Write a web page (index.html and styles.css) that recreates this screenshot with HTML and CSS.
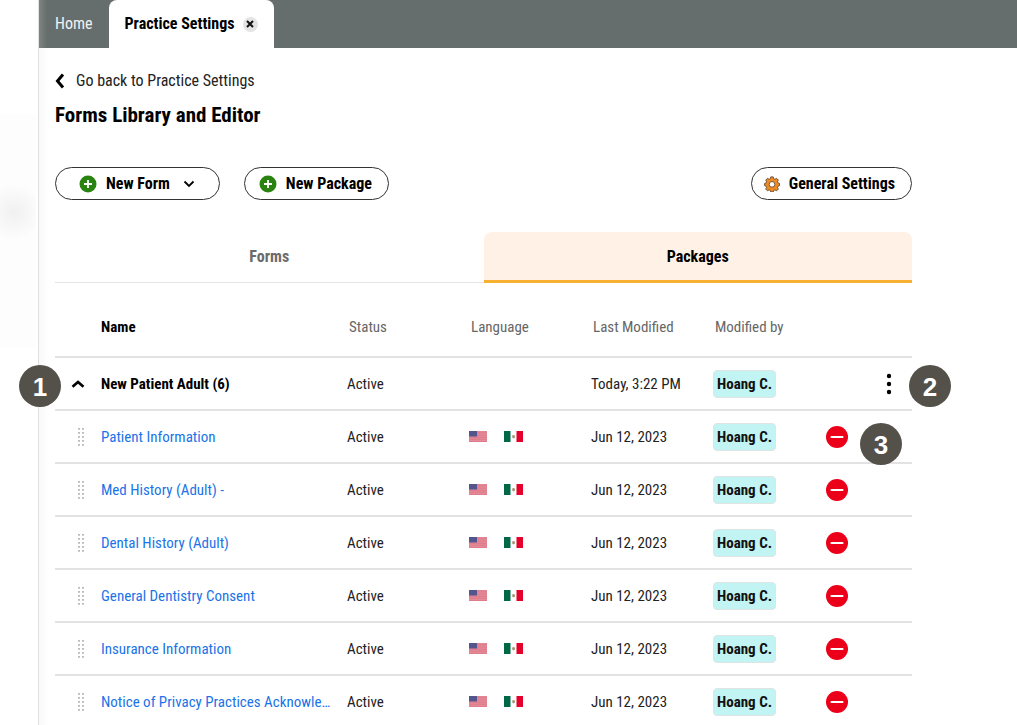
FILE: index.html
```html
<!DOCTYPE html>
<html lang="en">
<head>
    <meta charset="UTF-8">
    <meta name="viewport" content="width=device-width, initial-scale=1.0">
    <title>Forms Library and Editor</title>
    <link rel="stylesheet" href="styles.css">
</head>
<body>
    <!-- Shared icons -->
    <svg class="sprite" aria-hidden="true">
        <symbol id="icon-plus" viewBox="0 0 18 18">
            <circle cx="9" cy="9" r="8.5" fill="#2a8210"/>
            <path d="M9 5v8M5 9h8" stroke="#fff" stroke-width="1.8"/>
        </symbol>
        <symbol id="icon-remove" viewBox="0 0 22 22">
            <circle cx="11" cy="11" r="11" fill="#ec0019"/>
            <path d="M5.500 11h11" stroke="#fff" stroke-width="2.200" stroke-linecap="round"/>
        </symbol>
        <symbol id="icon-drag" viewBox="0 0 8 20">
            <path d="M2 1v18M6 1v18" stroke="#bcbcbc" stroke-width="2" stroke-dasharray="1.800 2.200"/>
        </symbol>
        <symbol id="flag-us" viewBox="0 0 18 11">
            <rect width="18" height="11" fill="#e58c98"/>
            <path d="M0 1.200h18M0 3h18M0 4.800h18M0 6.600h18M0 8.400h18M0 10.500h18" stroke="#dd7686" stroke-width=".7"/>
            <rect width="8" height="5.500" fill="#54558c"/>
        </symbol>
        <symbol id="flag-mx" viewBox="0 0 19 11">
            <rect width="19" height="11" fill="#fff"/>
            <rect width="6.500" height="11" fill="#006847"/>
            <rect x="12.500" width="6.500" height="11" fill="#e4002b"/>
            <path d="M8 5q1.500-2 3 0l-.5 1.500-1.300.8z" fill="#a98c68"/>
            <path d="M8.300 6.300q1.300 1.300 2.500 0" stroke="#7c9a66" fill="none" stroke-width=".7"/>
        </symbol>
    </svg>

    <div class="app">
        <aside class="rail"></aside>

        <div class="main">
            <nav class="tabbar">
                <a href="#" class="tab">Home</a>
                <div class="tab active">
                    <a href="#">Practice Settings</a>
                    <button class="close" aria-label="Close tab">
                        <svg width="8" height="8" viewBox="0 0 8 8"><path d="M1 1l6 6M7 1l-6 6" stroke="#111" stroke-width="2"/></svg>
                    </button>
                </div>
            </nav>

            <main class="content">
                <a href="#" class="back">
                    <svg width="10" height="16" viewBox="0 0 10 16"><path d="M8 1.500L2.500 8 8 14.500" fill="none" stroke="#000" stroke-width="3"/></svg>
                    Go back to Practice Settings
                </a>
                <h1>Forms Library and Editor</h1>

                <div class="toolbar">
                    <button class="btn btn-menu">
                        <svg width="18" height="18"><use href="#icon-plus"/></svg>
                        New Form
                        <svg class="chevron" width="12" height="8" viewBox="0 0 12 8"><path d="M1.500 1.500L6 6l4.500-4.500" fill="none" stroke="#000" stroke-width="1.800"/></svg>
                    </button>
                    <button class="btn">
                        <svg width="18" height="18"><use href="#icon-plus"/></svg>
                        New Package
                    </button>
                    <button class="btn btn-settings">
                        <svg width="16" height="16" viewBox="0 0 18 18">
                            <path d="M7.600 1h2.800l.5 2.100 1.400.6 1.900-1.100 2 2-1.100 1.900.6 1.300 1.800.5v2.600l-1.800.6-.6 1.300 1.100 1.900-2 2-1.900-1.100-1.300.6-.6 1.900H7.600l-.5-1.900-1.300-.6-1.900 1.100-2-2L3 12.800l-.6-1.300-1.700-.6V8.300l1.700-.5.6-1.300-1.100-1.900 2-2 1.900 1.100 1.300-.6z" fill="#f18a21" stroke="#5f4a35" stroke-width="1"/>
                            <circle cx="9" cy="9.400" r="3.200" fill="#fff" stroke="#5f4a35" stroke-width="1"/>
                        </svg>
                        General Settings
                    </button>
                </div>

                <div class="switch">
                    <a href="#">Forms</a>
                    <a href="#" class="selected">Packages</a>
                </div>

                <div class="list">
                    <table>
                        <thead>
                            <tr>
                                <th class="col-handle"></th>
                                <th class="col-name">Name</th>
                                <th class="col-info">Status</th>
                                <th class="col-info">Language</th>
                                <th class="col-info">Last Modified</th>
                                <th class="col-user">Modified by</th>
                                <th class="col-remove"></th>
                                <th class="col-menu"></th>
                            </tr>
                        </thead>
                        <tbody id="rows">
                            <tr>
                                <td><button class="icon toggle" aria-label="Collapse package"><svg width="14" height="10" viewBox="0 0 14 10"><path d="M1.500 7.800L7 3l5.500 4.800" fill="none" stroke="#000" stroke-width="2.600"/></svg></button></td>
                                <td class="package">New Patient Adult (6)</td>
                                <td>Active</td>
                                <td></td>
                                <td>Today, 3:22 PM</td>
                                <td><span class="user">Hoang C.</span></td>
                                <td></td>
                                <td><button class="icon" aria-label="More actions"><svg width="6" height="22" viewBox="0 0 6 22"><circle cx="3" cy="3" r="2.200"/><circle cx="3" cy="11" r="2.200"/><circle cx="3" cy="19" r="2.200"/></svg></button></td>
                            </tr>
                        </tbody>
                    </table>
                    <span class="callout one">1</span>
                    <span class="callout two">2</span>
                    <span class="callout three">3</span>
                </div>
            </main>
        </div>
    </div>

    <script src="script.js"></script>
</body>
</html>
```
FILE: styles.css
```css
* {
    box-sizing: border-box;
}

body {
    margin: 0;
    background: #fff;
    color: #222;
    font-family: "Roboto Condensed", "Liberation Sans Narrow", Roboto, sans-serif;
    font-size: 16px;
    line-height: 20px;
}

a {
    color: inherit;
    text-decoration: none;
}

button {
    font: inherit;
    color: inherit;
    padding: 0;
    border: 0;
    background: none;
    cursor: pointer;
}

svg {
    display: block;
    flex: none;
}

.sprite {
    display: none;
}

.app {
    display: flex;
    height: 100vh;
    overflow: hidden;
}

/* Narrow strip on the left */
.rail {
    flex: none;
    width: 39px;
    border-right: 1px solid #e0e0e0;
    background:
        radial-gradient(circle at 14px 98px, #f0f0f0, #fdfdfd 28px) 0 114px / 36px 234px no-repeat,
        #fff;
}

.main {
    flex: 1;
    min-width: 0;
    background: linear-gradient(to right, #f8f8f8, #fff 10px);
}

/* Top tabs */
.tabbar {
    display: flex;
    height: 48px;
    background: linear-gradient(to right, #7d8583, #656e6c 8px);
}

.tab {
    display: flex;
    align-items: center;
    padding: 0 16px;
    color: #f2f2f2;
}

.tab.active {
    gap: 8px;
    background: #fff;
    color: #000;
    font-weight: bold;
    border-radius: 8px 8px 0 0;
}

.close {
    display: grid;
    place-items: center;
    width: 15px;
    height: 15px;
    border-radius: 50%;
    background: #e4e4e4;
}

.content {
    padding: 23px 105px 0 16px;
}

.back {
    display: flex;
    align-items: center;
    gap: 11px;
}

h1 {
    margin: 11px 0 39px;
    font-size: 21px;
    line-height: 26px;
    color: #000;
}

.toolbar {
    display: flex;
    gap: 24px;
    margin-bottom: 32px;
}

.btn {
    display: flex;
    align-items: center;
    gap: 9px;
    height: 33px;
    padding: 0 16px 0 14px;
    border: 1px solid #333;
    border-radius: 17px;
    background: #fff;
    color: #000;
    font-weight: bold;
}

.btn-menu {
    padding: 0 24px 0 23px;
}

.chevron {
    margin-left: 4px;
}

.btn-settings {
    margin-left: auto;
    padding-left: 12px;
}

/* Forms / Packages switch */
.switch {
    display: grid;
    grid-template-columns: 1fr 1fr;
    font-weight: bold;
    color: #6b6b6b;
    text-align: center;
    line-height: 46px;
}

.switch a {
    padding-top: 2px;
    border-bottom: 1px solid #e4e4e4;
}

.switch .selected {
    border-bottom: 3px solid #f7b02f;
    border-radius: 8px 8px 0 0;
    background: #fff1e6;
    color: #000;
}

.list {
    position: relative;
    font-size: 15px;
}

table {
    width: 100%;
    table-layout: fixed;
    border-collapse: collapse;
}

th,
td {
    height: 53px;
    padding: 0;
    border-bottom: 2px solid #e2e2e2;
    text-align: left;
    white-space: nowrap;
}

th {
    height: 74px;
    padding: 15px 0 0 2px;
    font-weight: normal;
    color: #666;
}

.col-handle {
    width: 46px;
}

.col-name {
    padding-left: 0;
    font-weight: bold;
    color: #000;
}

.col-info {
    width: 122px;
}

.col-user {
    width: 113px;
}

.col-remove {
    width: 60px;
}

.col-menu {
    width: 26px;
}

.icon {
    display: block;
}

.toggle {
    margin-left: 16px;
}

.drag {
    display: block;
    margin-left: 22px;
    cursor: grab;
}

.package {
    font-weight: bold;
    color: #000;
}

.form {
    color: #1a73e8;
}

.flags {
    display: flex;
    gap: 17px;
}

.user {
    display: inline-block;
    padding: 3px;
    border: 1px solid #dfe5e5;
    border-radius: 4px;
    background: #c1f4f2;
    color: #111;
    font-weight: bold;
}

/* Numbered markers over the list */
.callout {
    position: absolute;
    width: 42px;
    height: 42px;
    border-radius: 50%;
    background: #54504a;
    color: #fff;
    font: bold 26px/44px "Liberation Sans", sans-serif;
    text-align: center;
}

.one {
    top: 82px;
    left: -36px;
}

.two {
    top: 82px;
    right: -39px;
}

.three {
    top: 140px;
    right: 10px;
}
```
FILE: script.js
```js
const forms = [
    "Patient Information",
    "Med History (Adult) -",
    "Dental History (Adult)",
    "General Dentistry Consent",
    "Insurance Information",
    "Notice of Privacy Practices Acknowle…"
];

const rows = document.getElementById("rows");

// One row for each form of the package
forms.forEach(name => {
    rows.insertAdjacentHTML("beforeend", `
        <tr>
            <td><svg class="drag" width="8" height="20"><use href="#icon-drag"/></svg></td>
            <td class="form"><a href="#">${name}</a></td>
            <td>Active</td>
            <td><div class="flags">
                <svg width="18" height="11"><use href="#flag-us"/></svg>
                <svg width="19" height="11"><use href="#flag-mx"/></svg>
            </div></td>
            <td>Jun 12, 2023</td>
            <td><span class="user">Hoang C.</span></td>
            <td><button class="icon" aria-label="Remove form"><svg width="22" height="22"><use href="#icon-remove"/></svg></button></td>
            <td></td>
        </tr>`);
});
```
